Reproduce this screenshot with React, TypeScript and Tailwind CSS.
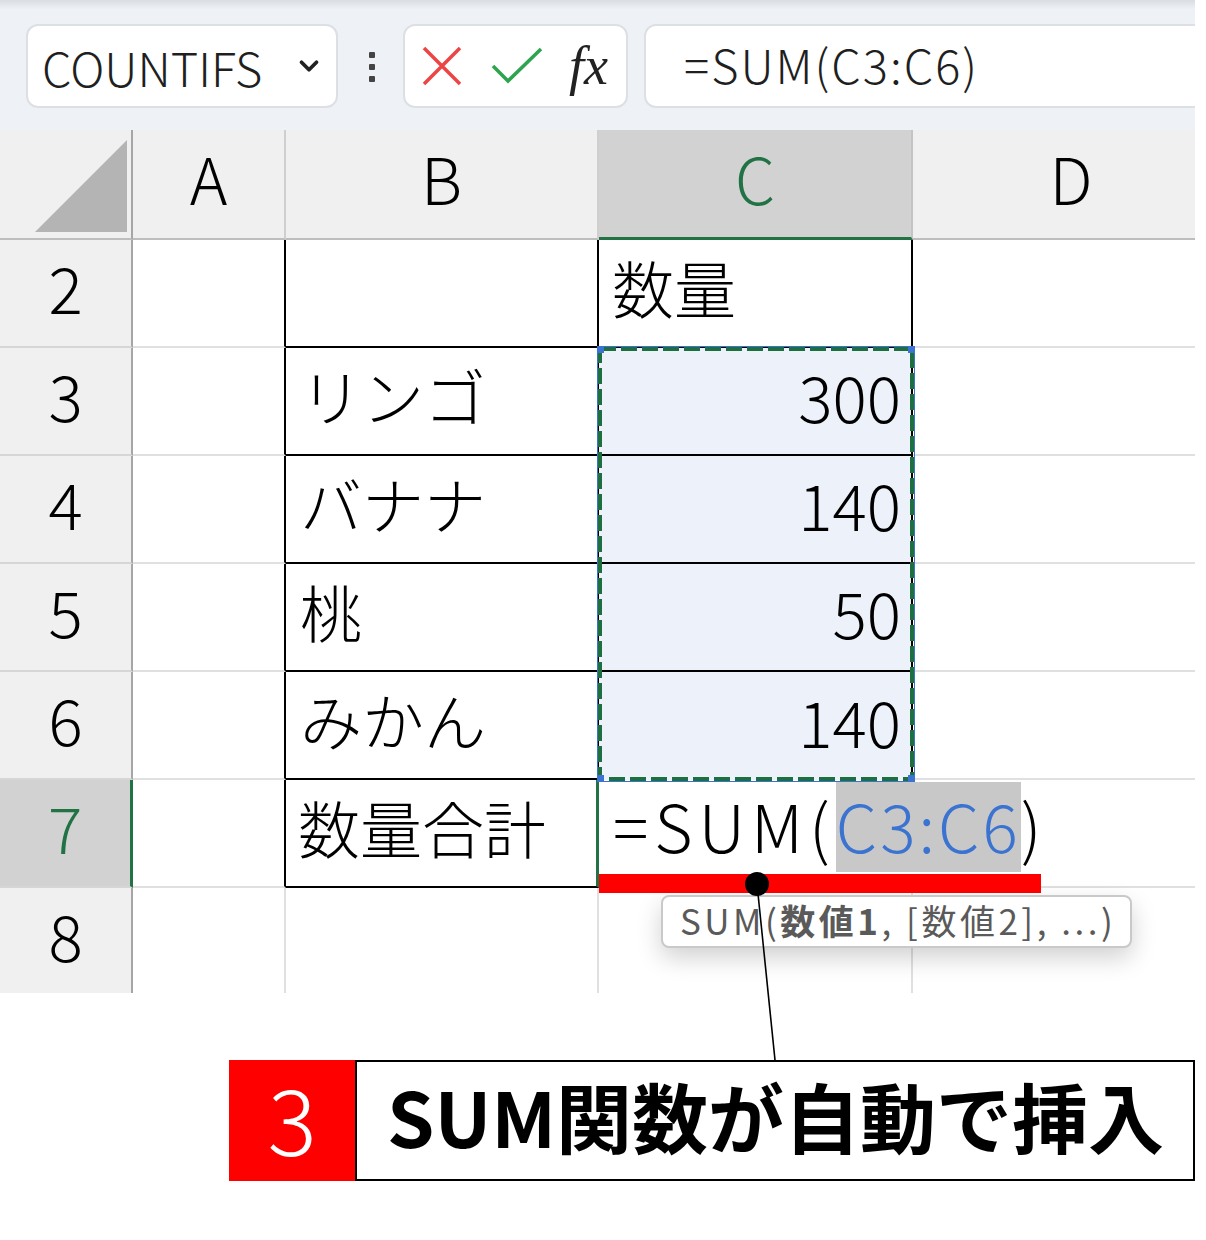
import React from "react";
import { ChevronDown } from "lucide-react";

const font = "font-['Noto_Sans_CJK_JP','Noto_Sans',sans-serif]";

const rowHead =
  "flex items-center justify-center bg-[#f0f0f0] border-r-2 border-r-[#a6a6a6] border-b-2 border-b-[#d6d6d6] pb-[14px] text-[64px] font-light leading-none";
const colHead =
  "flex items-center justify-center bg-[#f0f0f0] border-r-2 border-r-[#cfcfcf] border-b-2 border-b-[#bdbdbd] pb-[14px] text-[64px] font-light leading-none";

// C3:C6 の値
const values = ["300", "140", "50", "140"];

const Toolbar = () => (
  <div className="flex w-[1195px] h-[130px] items-start overflow-hidden bg-linear-to-b from-[#d9dde2] to-[#eef1f5] to-[7%] pt-[24px]">
    {/* Name box */}
    <div className="ml-[26px] flex h-[84px] w-[312px] shrink-0 items-center justify-between rounded-[12px] border-2 border-[#dcdfe3] bg-white pl-[14px] pr-[12px]">
      <span className="text-[47px] font-light leading-none text-[#1f1f1f]">COUNTIFS</span>
      <ChevronDown size={30} strokeWidth={3} className="text-[#222]" />
    </div>

    {/* dots */}
    <div className="ml-[31px] mt-[28px] flex shrink-0 flex-col gap-[6px]">
      <span className="h-[6px] w-[6px] rounded-[1px] bg-[#444]" />
      <span className="h-[6px] w-[6px] rounded-[1px] bg-[#444]" />
      <span className="h-[6px] w-[6px] rounded-[1px] bg-[#444]" />
    </div>

    {/* cancel / enter / fx */}
    <div className="ml-[28px] flex h-[84px] w-[225px] shrink-0 items-center rounded-[12px] border-2 border-[#dcdfe3] bg-white pl-[17px]">
      <svg width="40" height="40" viewBox="0 0 40 40" className="shrink-0">
        <path d="M2 2 L38 38 M38 2 L2 38" stroke="#ee4444" strokeWidth="3.5" fill="none" />
      </svg>
      <svg width="52" height="40" viewBox="0 0 52 40" className="ml-[29px] shrink-0">
        <path d="M2 20 L17 35 L50 3" stroke="#2ea44f" strokeWidth="3.5" fill="none" />
      </svg>
      <span className="ml-[26px] font-['Liberation_Serif',serif] text-[54px] italic leading-none text-[#222]">
        fx
      </span>
    </div>

    {/* formula bar */}
    <div className="ml-[16px] flex h-[84px] w-[580px] shrink-0 items-center rounded-l-[12px] border-2 border-[#dcdfe3] bg-white pl-[38px]">
      <span className="pb-[6px] text-[47px] font-light leading-none tracking-[2px] text-[#1f1f1f]">
        =SUM(C3:C6)
      </span>
    </div>
  </div>
);

const Sheet = () => (
  <div className="grid w-[1195px] grid-cols-[133px_153px_313px_314px_282px] grid-rows-[110px_repeat(6,108px)_105px]">
    {/* header */}
    <div className="relative bg-[#f0f0f0] border-r-2 border-r-[#a6a6a6] border-b-2 border-b-[#bdbdbd]">
      <svg width="133" height="110" className="absolute inset-0">
        <polygon points="35,102 127,102 127,10" fill="#b4b4b4" />
      </svg>
    </div>
    <div className={colHead}>A</div>
    <div className={colHead}>B</div>
    <div className="flex items-center justify-center bg-[#d2d2d2] border-r-2 border-r-[#c4c4c4] border-b-[3px] border-b-[#217346] pb-[14px] text-[64px] font-light leading-none text-[#217346]">
      C
    </div>
    <div className="flex items-center justify-center bg-[#f0f0f0] border-b-2 border-b-[#bdbdbd] pb-[14px] pl-[34px] text-[64px] font-light leading-none">
      D
    </div>

    {/* row 2 */}
    <div className={rowHead}>2</div>
    <div className="border-r-2 border-r-black border-b-2 border-b-[#e0e0e0]" />
    <div className="border-r-2 border-r-black border-b-2 border-b-black" />
    <div className="flex items-center border-r-2 border-r-black border-b-2 border-b-black pb-[12px] pl-[13px] text-[62px] font-light">
      数量
    </div>
    <div className="border-b-2 border-b-[#e0e0e0]" />

    {/* row 3 (C3:C6 is one block spanning four rows) */}
    <div className={rowHead}>3</div>
    <div className="border-r-2 border-r-black border-b-2 border-b-[#e0e0e0]" />
    <div className="flex items-center border-r-2 border-r-black border-b-2 border-b-black pb-[12px] pl-[14px] text-[62px] font-light">
      リンゴ
    </div>
    <div className="relative row-span-4 flex flex-col">
      {values.map((v, i) => (
        <div
          key={i}
          className={
            i < 3
              ? "flex h-[108px] items-center justify-end border-r-2 border-r-black border-b-2 border-b-black bg-[#edf1f9] pb-[12px] pr-[10px] text-[64px] font-light"
              : "flex h-[108px] items-center justify-end border-r-2 border-r-black bg-[#edf1f9] pb-[12px] pr-[10px] text-[64px] font-light"
          }
        >
          {v}
        </div>
      ))}
      {/* copy marquee */}
      <svg className="pointer-events-none absolute left-[-2px] top-[-2px]" width="318" height="436">
        <rect x="0.5" y="0.5" width="317" height="435" fill="none" stroke="#3b73d1" strokeWidth="1" />
        <rect x="3" y="3" width="312" height="430" fill="none" stroke="#1d6f3f" strokeWidth="4" strokeDasharray="16 5" />
        <rect x="-2" y="-2" width="9" height="9" fill="#3b73d1" />
        <rect x="311" y="-2" width="9" height="9" fill="#3b73d1" />
        <rect x="-2" y="429" width="9" height="9" fill="#3b73d1" />
        <rect x="311" y="429" width="9" height="9" fill="#3b73d1" />
      </svg>
    </div>
    <div className="border-b-2 border-b-[#e0e0e0]" />

    {/* rows 4-6 */}
    {[
      ["4", "バナナ"],
      ["5", "桃"],
      ["6", "みかん"],
    ].map(([n, label]) => (
      <React.Fragment key={n}>
        <div className={rowHead}>{n}</div>
        <div className="border-r-2 border-r-black border-b-2 border-b-[#e0e0e0]" />
        <div className="flex items-center border-r-2 border-r-black border-b-2 border-b-black pb-[12px] pl-[14px] text-[62px] font-light">
          {label}
        </div>
        <div className="border-b-2 border-b-[#e0e0e0]" />
      </React.Fragment>
    ))}

    {/* row 7 */}
    <div className="flex items-center justify-center bg-[#d2d2d2] border-r-[3px] border-r-[#217346] border-b-2 border-b-[#d6d6d6] pb-[14px] text-[64px] font-light leading-none text-[#217346]">
      7
    </div>
    <div className="border-r-2 border-r-black border-b-2 border-b-[#e0e0e0]" />
    <div className="flex items-center border-r-[3px] border-r-[#217346] border-b-2 border-b-black pb-[12px] pl-[12px] text-[62px] font-light">
      数量合計
    </div>
    <div className="relative z-10 flex items-start whitespace-nowrap pl-[14px] pt-[2px] text-[66px] font-light leading-[84px]">
      <span className="tracking-[6px]">=SUM(</span>
      <span className="inline-block h-[90px] bg-[#c8c8c8] tracking-[3px] text-[#3b73d1]">C3:C6</span>
      <span className="inline-block h-[92px] w-[2px] bg-black" />
      <span>)</span>
    </div>
    <div className="border-b-2 border-b-[#e0e0e0]" />

    {/* row 8 */}
    <div className="flex items-center justify-center bg-[#f0f0f0] border-r-2 border-r-[#a6a6a6] pb-[14px] text-[64px] font-light leading-none">
      8
    </div>
    <div className="border-r-2 border-r-[#e0e0e0]" />
    <div className="border-r-2 border-r-[#e0e0e0]" />
    <div className="border-r-2 border-r-[#e0e0e0]" />
    <div />
  </div>
);

export default function App() {
  return (
    <div className={`relative h-[1240px] w-[1206px] overflow-hidden bg-white text-black ${font}`}>
      <Toolbar />
      <Sheet />

      {/* callout */}
      <div className="ml-[229px] mt-[67px] flex h-[121px]">
        <div className="flex w-[126px] items-center justify-center bg-[#ff0000] pb-[10px] text-[92px] font-light leading-none text-white">
          3
        </div>
        <div className="flex w-[840px] items-center border-2 border-black pb-[12px] pl-[30px] text-[76px] font-bold leading-none">
          SUM関数が自動で挿入
        </div>
      </div>

      {/* function tooltip */}
      <div className="absolute left-[661px] top-[895px] z-20 flex h-[53px] w-[471px] items-center rounded-[8px] border-2 border-[#c9c9c9] bg-white pb-[4px] pl-[17px] text-[35px] leading-none tracking-[3.5px] text-[#5a5a5a] shadow-[0_10px_24px_rgba(0,0,0,0.18)]">
        SUM(<b className="font-bold">数値1</b>, [数値2], ...)
      </div>

      {/* red underline, dot and leader line */}
      <div className="absolute left-[599px] top-[874px] z-20 h-[19px] w-[442px] bg-[#ff0000]" />
      <svg className="pointer-events-none absolute left-0 top-0 z-30" width="1206" height="1240">
        <line x1="757" y1="884" x2="775" y2="1060" stroke="#000" strokeWidth="1.6" />
        <circle cx="757" cy="884" r="12" fill="#000" />
      </svg>
    </div>
  );
}
